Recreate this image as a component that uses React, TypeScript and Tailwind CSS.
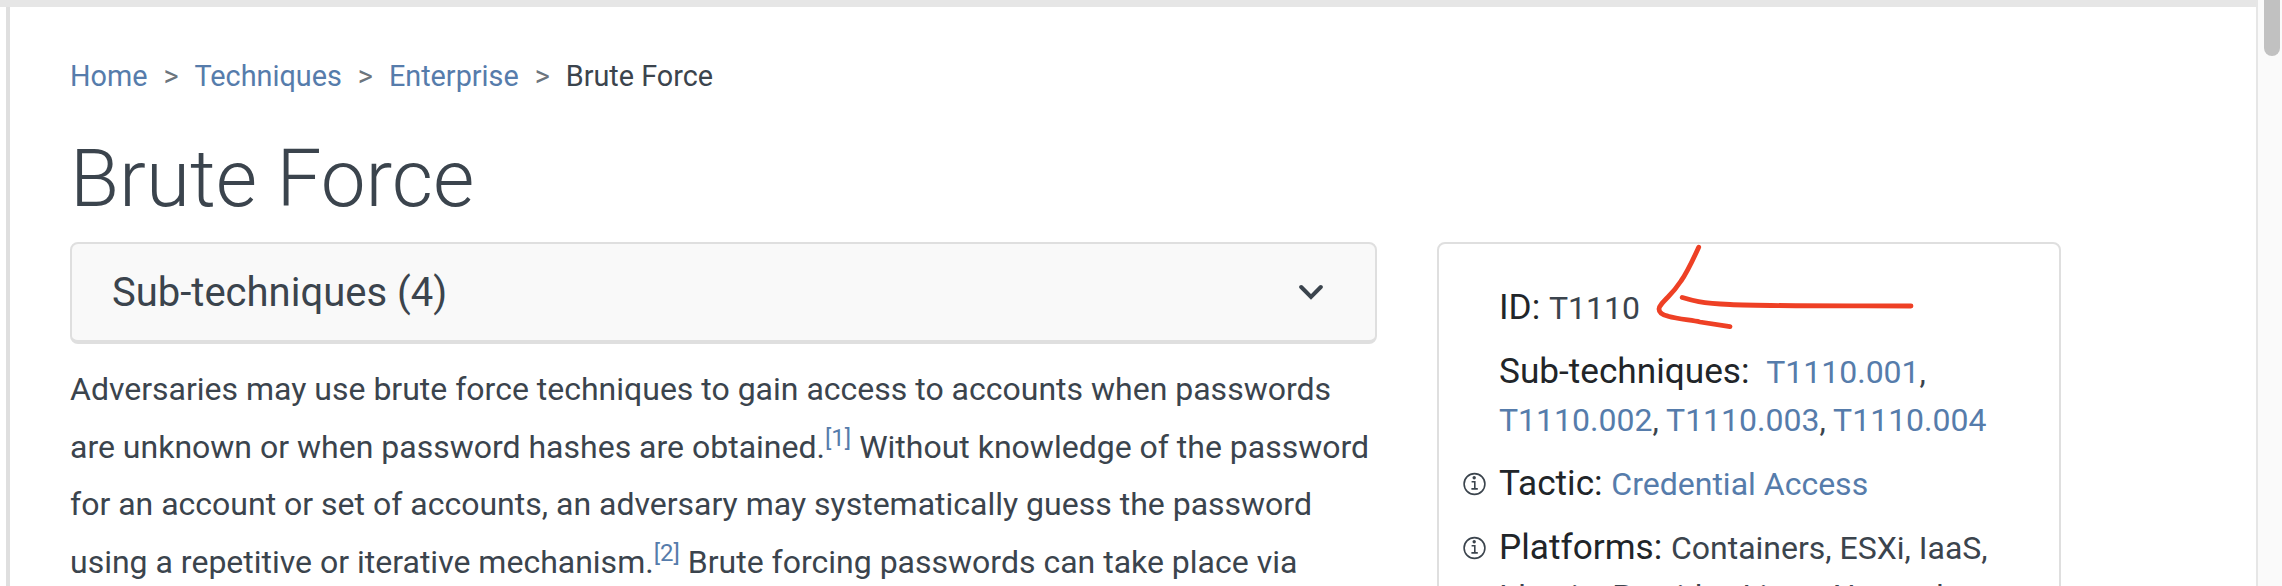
import type { ReactNode } from "react";

const Link = ({ children }: { children: ReactNode }) => (
  <a href="#" className="text-[#567cab]">{children}</a>
);

const Sep = () => <span className="text-[#6c757d]">&gt;</span>;

const Cite = ({ n }: { n: number }) => (
  <sup className="relative -top-[12px] align-baseline text-[24px] leading-[0]">
    <Link>[{n}]</Link>
  </sup>
);

const InfoIcon = () => (
  <svg width="24" height="24" viewBox="0 0 24 24" className="mt-[12px] shrink-0" fill="none" stroke="#3b444d">
    <circle cx="11.5" cy="12" r="10.4" strokeWidth="1.6" />
    <circle cx="11.2" cy="5.8" r="1.7" fill="#3b444d" stroke="none" />
    <path d="M8.6 9.800h3.200v7M8.400 16.900h6.400" strokeWidth="1.600" />
  </svg>
);

const Row = ({ label, info, children }: { label: string; info?: boolean; children: ReactNode }) => (
  <div className="flex">
    <div className="w-[36px] shrink-0">{info && <InfoIcon />}</div>
    <div className="leading-[48px] whitespace-nowrap">
      <span className="text-[35.2px] leading-none text-[#212529]">{label} </span>
      {children}
    </div>
  </div>
);

export default function App() {
  return (
    <div className="flex h-[586px] w-[2282px] overflow-hidden bg-white font-['Roboto',sans-serif] text-[32px] text-[#3b444d]">
      <div className="flex w-[2258px] flex-col">
        <div className="h-[7px] shrink-0 bg-[#e6e6e6]" />
        <div className="ml-[6px] flex-1 border-r-2 border-l-4 border-r-[#e6e6e6] border-l-[#dfdfdf] pl-[60px]">
          <nav className="mt-[47px] flex h-[44px] items-center gap-[16px] text-[28.8px] leading-[44px]">
            <Link>Home</Link>
            <Sep />
            <Link>Techniques</Link>
            <Sep />
            <Link>Enterprise</Link>
            <Sep />
            <span>Brute Force</span>
          </nav>
          <h1 className="mt-[33px] h-[111px] text-[80px] leading-[96px] font-light">Brute Force</h1>
          <div className="flex items-start">
            <main className="w-[1307px]">
              <div className="flex h-[102px] items-center justify-between rounded-[8px] border-2 border-b-4 border-[#dfdfdf] bg-[#f9f9f9] pr-[52px] pl-[40px]">
                <span className="pt-[2px] text-[40px] leading-[48px]">Sub-techniques (4)</span>
                <svg width="24" height="16" viewBox="0 0 24 16" fill="none" stroke="#3b444d" strokeWidth="4" strokeLinecap="round">
                  <path d="M2.200 3l9.800 9.800 9.800-9.800" />
                </svg>
              </div>
              <p className="mt-[17px] leading-[57.6px] whitespace-nowrap">
                Adversaries may use brute force techniques to gain access to accounts when passwords
                <br />
                are unknown or when password hashes are obtained.<Cite n={1} /> Without knowledge of the password
                <br />
                for an account or set of accounts, an adversary may systematically guess the password
                <br />
                using a repetitive or iterative mechanism.<Cite n={2} /> Brute forcing passwords can take place via
              </p>
            </main>
            <aside className="ml-[60px] flex h-[500px] w-[624px] flex-col gap-[16px] rounded-[8px] border-2 border-[#dfdfdf] pt-[40px] pl-[24px]">
              <Row label="ID:">T1110</Row>
              <Row label="Sub-techniques:">
                &nbsp;<Link>T1110.001</Link>,
                <br />
                <Link>T1110.002</Link>, <Link>T1110.003</Link>, <Link>T1110.004</Link>
              </Row>
              <Row label="Tactic:" info><Link>Credential Access</Link></Row>
              <Row label="Platforms:" info>
                Containers, ESXi, IaaS,
                <br />
                Identity Provider, Linux, Network
              </Row>
            </aside>
            <svg className="absolute top-[240px] left-[1650px]" width="270" height="92" viewBox="0 0 270 92" fill="none" stroke="#ee4025" strokeLinecap="round" strokeLinejoin="round">
              <path d="M48.700 7.200C42 22 36 34 31 41C27 47 23 52 18 57C13 62 9 66 9 69C9 73 13 75 18 76.200C28 79 40 80 50 82L80 86.700" strokeWidth="4.800" />
              <path d="M32.200 57.500C42 60.500 50 63 80 64.500C108 66 150 65.800 261 66" strokeWidth="4.800" />
            </svg>
          </div>
        </div>
      </div>
      <div className="w-[24px] bg-[#fafafa] pl-[6px]">
        <div className="h-[56px] w-[16px] rounded-b-full bg-[#c1c1c1]" />
      </div>
    </div>
  );
}
